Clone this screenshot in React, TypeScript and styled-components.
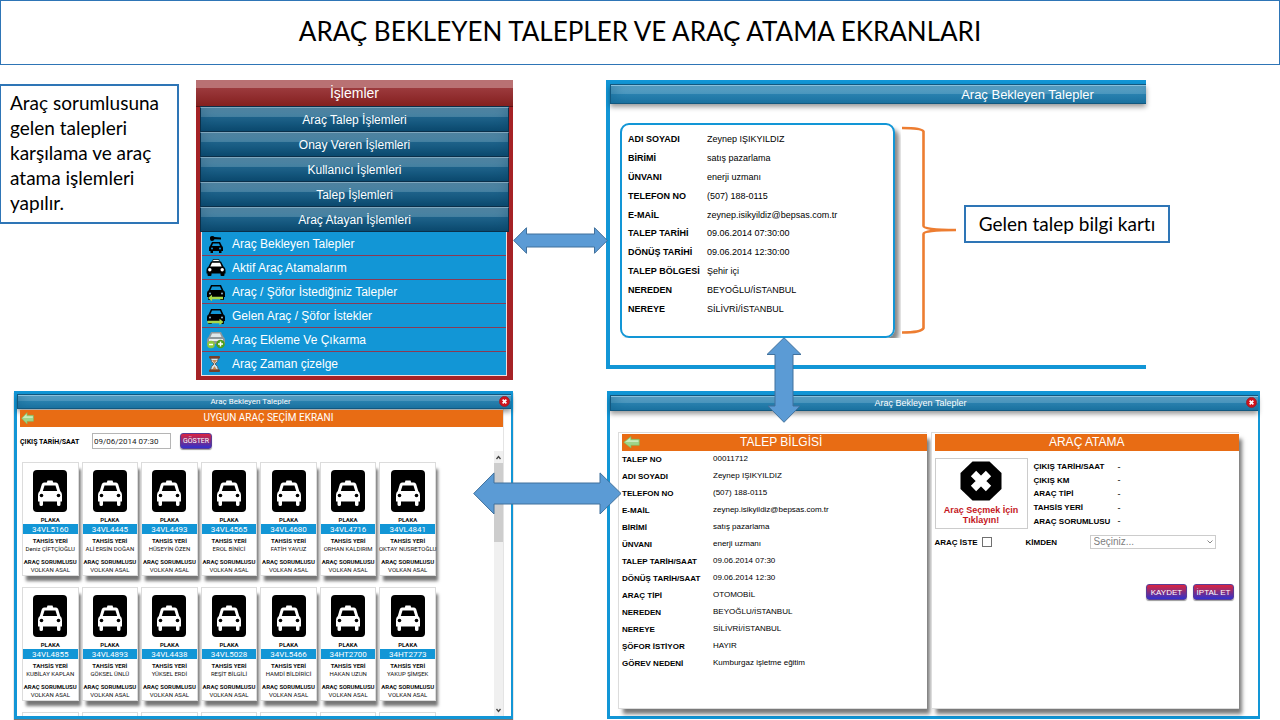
import React from "react";
import styled, { createGlobalStyle } from "styled-components";

const SANS = `"Liberation Sans", Arial, sans-serif`;
const NARROW = `Roboto, "Liberation Sans", sans-serif`;
const SLIDE = `Lato, "Open Sans", sans-serif`;
const BLUE = "#1296d6";
const ORANGE = "#e86c14";

const GlobalStyle = createGlobalStyle`
  * { box-sizing: border-box; }
  body { margin: 0; background: #fff; color: #000; font-family: ${SANS}; font-variant-ligatures: none; }
  button, input, select { font-family: inherit; margin: 0; }
  table { border-collapse: collapse; }
  th, td { padding: 0; text-align: left; }
  svg { display: block; }
`;

const Page = styled.div`
  overflow: hidden;
`;

const SlideTitle = styled.h1`
  margin: 0;
  height: 65px;
  display: flex;
  align-items: center;
  justify-content: center;
  padding-bottom: 4px;
  border: 1px solid #2e75b6;
  font-family: ${SLIDE};
  font-size: 26px;
  font-weight: 400;
`;

const Board = styled.main`
  display: grid;
  grid-template-columns: minmax(0, 513fr) minmax(0, 654fr);
  gap: 11px 93px;
  padding: 15px 20px 1px 0;
  align-items: start;
`;

const MenuCell = styled.div`
  display: flex;
  align-items: flex-start;
  gap: 17px;
`;

const Note = styled.p`
  margin: 4px 0 0;
  width: 179px;
  height: 140px;
  padding: 4px 9px;
  border: 2px solid #2e75b6;
  border-left-width: 1px;
  font-family: ${SLIDE};
  font-size: 19px;
  line-height: 25px;
`;

const Menu = styled.nav`
  position: relative;
  flex: 1;
  padding: 0 4px 4px;
  background: #a52226;
`;

const MenuTitle = styled.h2`
  margin: 0 -4px;
  height: 27px;
  line-height: 26px;
  text-align: center;
  color: #fff;
  font-size: 14px;
  font-weight: 400;
  background: linear-gradient(#b97173 0 8px, #9c3a3d 8px, #84201f 100%);
  border-bottom: 1px solid #5c1214;
`;

const MenuButton = styled.button`
  display: block;
  width: 100%;
  height: 25px;
  padding: 1px 0 0;
  border: 1px solid #0a2f49;
  border-top-color: #7fa6bd;
  outline: 0;
  box-shadow: inset 0 0 14px #0a3f6066, 0 -1px #0a2f49;
  background: linear-gradient(#5f93b0, #4682a3 9px, #1f648c 9px, #0c4c72);
  color: #fff;
  font-size: 12px;
  line-height: 20px;
`;

const MenuList = styled.ul`
  list-style: none;
  margin: 0 2px 0 1px;
  padding: 0;
  border: 1px solid #f3dede;
  border-top: 0;
  background: ${BLUE};
`;

const MenuItem = styled.li`
  border-bottom: 1px solid #8a3a55;
  &:last-child { border-bottom: 0; }
`;

const MenuLink = styled.a`
  display: flex;
  align-items: center;
  gap: 6px;
  height: 23px;
  padding-left: 4px;
  color: #fff;
  font-size: 12px;
  text-decoration: none;
`;

const HArrow = styled.svg`
  position: absolute;
  z-index: 3;
  left: 100%;
  top: 147px;
`;

const WideArrow = styled.svg`
  position: absolute;
  z-index: 3;
  left: calc(100% - 38px);
  top: 78px;
`;

const DownArrow = styled.svg`
  position: absolute;
  z-index: 3;
  left: 156px;
  bottom: -58px;
`;

const Bar = styled.header<{ $h: number; $narrow?: boolean }>`
  position: relative;
  height: ${(p) => p.$h}px;
  display: flex;
  align-items: center;
  justify-content: center;
  border: 1px solid #12587f;
  border-right-width: 0;
  box-shadow: inset 0 1px #8ac0dc, inset 4px 0 12px #0d5f8a66, 0 3px 5px #0006;
  background: linear-gradient(#68a9cb, #4e9ac1 48%, #2c84b2 48%, #1e76a5);
  color: #fff;
  font-family: ${(p) => (p.$narrow ? NARROW : SANS)};
`;

const BarTitle = styled.h2<{ $size: number }>`
  margin: 0 28px 0 0;
  font-size: ${(p) => p.$size}px;
  font-weight: 400;
`;

const RequestWindow = styled.section`
  position: relative;
  margin-right: 114px;
  border: solid ${BLUE};
  border-width: 4px 0 4px 4px;
  ${BarTitle} { margin: 0 0 0 298px; }
`;

const RequestRow = styled.div`
  display: flex;
  align-items: flex-start;
  padding: 19px 0 27px 10px;
`;

const RequestCard = styled.div`
  width: 275px;
  height: 215px;
  padding: 5px 0 0 6px;
  border: 2px solid ${BLUE};
  border-radius: 9px;
  box-shadow: 5px 5px 4px -1px #0007;
  clip-path: inset(-2px -6px 0 0);
`;

const Brace = styled.svg`
  margin: 2px 0 0 7px;
`;

const Caption = styled.p`
  position: absolute;
  z-index: 2;
  left: 354px;
  top: 121px;
  width: 206px;
  height: 38px;
  margin: 0;
  border: 2px solid #2e75b6;
  background: #fff;
  text-align: center;
  font-family: ${SLIDE};
  font-size: 19px;
  line-height: 34px;
  white-space: nowrap;
`;

const RequestTable = styled.table`
  height: 188px;
  th { width: 79px; font-size: 9px; white-space: nowrap; }
  td { font-size: 9px; }
`;

const PickWindow = styled.section`
  position: relative;
  margin-left: 14px;
  border: 3px solid ${BLUE};
  border-right-width: 2px;
  box-shadow: 0 2px 1px #0008;
`;

const CloseButton = styled.button`
  position: absolute;
  right: 1px;
  top: 1px;
  width: 11px;
  height: 11px;
  padding: 0;
  border: 0;
  background: none;
`;

const PickBody = styled.div`
  margin-right: 7px;
  padding: 1px 0 0 3px;
  border-right: 1px solid #e4e4e4;
`;

const Banner = styled.div<{ $narrow?: boolean }>`
  position: relative;
  display: flex;
  align-items: center;
  justify-content: center;
  height: 17px;
  padding-bottom: 2px;
  background: ${ORANGE};
  color: #fff;
  font-family: ${(p) => (p.$narrow ? NARROW : SANS)};
  font-size: ${(p) => (p.$narrow ? 10 : 12)}px;
`;

const BannerTitle = styled.h3<{ $shift?: boolean }>`
  margin: 0 0 0 ${(p) => (p.$shift ? 14 : 0)}px;
  font-size: inherit;
  line-height: 14px;
  font-weight: 400;
`;

const BackButton = styled.button`
  position: absolute;
  left: 1px;
  top: 2px;
  padding: 0;
  border: 0;
  background: none;
`;

const FilterRow = styled.div`
  display: flex;
  align-items: flex-start;
  height: 24px;
  padding-top: 6px;
  font-family: ${NARROW};
  label { width: 72px; font-size: 7px; line-height: 18px; font-weight: 700; white-space: nowrap; }
`;

const DateInput = styled.input`
  width: 79px;
  height: 16px;
  margin-right: 9px;
  padding: 0 1px;
  border: 1px solid #b5b5b5;
  color: #222;
  font-size: 8px;
`;

const ActionButton = styled.button<{ $w: number; $size: number }>`
  width: ${(p) => p.$w}px;
  height: 16px;
  padding: 0;
  border: 1px solid #5a3d96;
  border-radius: 3px;
  background: linear-gradient(#dc2340, #7a2d86 55%, #3131d0);
  color: #fff;
  font-size: ${(p) => p.$size}px;
  box-shadow: 0 1px 1px #0006;
`;

const Scroller = styled.div`
  display: flex;
  height: 265px;
  overflow: hidden;
`;

const CarGrid = styled.div`
  flex: 1;
  display: grid;
  grid-template-columns: repeat(7, minmax(0, 1fr));
  grid-auto-rows: 114px;
  gap: 11px 3px;
  padding: 11px 58px 0 2px;
`;

const CarCard = styled.article`
  display: flex;
  flex-direction: column;
  align-items: stretch;
  border: 1px solid #dcdcdc;
  background: #fff;
  box-shadow: 3px 6px 3px -1px #0008;
  padding-top: 7px;
  text-align: center;
  font-family: ${NARROW};
  white-space: nowrap;
  svg { align-self: center; margin-bottom: 4px; flex: none; }
`;

const CardLabel = styled.strong<{ $gap?: number }>`
  display: flex;
  justify-content: center;
  margin-top: ${(p) => p.$gap || 0}px;
  font-size: 6px;
  line-height: 8px;
  color: #111;
`;

const CardText = styled.span`
  display: flex;
  justify-content: center;
  font-size: 6px;
  line-height: 8px;
  color: #111;
`;

const Plate = styled.span`
  height: 10px;
  background: ${BLUE};
  color: #fff;
  font-size: 8px;
  line-height: 12px;
  overflow: hidden;
`;

const ScrollTrack = styled.div`
  width: 9px;
  display: flex;
  flex-direction: column;
  align-items: center;
  background: #f0f0f0;
`;

const ScrollThumb = styled.div`
  width: 9px;
  height: 79px;
  margin-bottom: auto;
  background: #cdcdcd;
`;

const DetailWindow = styled.section`
  position: relative;
  margin-left: 1px;
  height: 328px;
  border: 3px solid ${BLUE};
  border-top-width: 4px;
  border-right-width: 2px;
`;

const DetailBody = styled.div`
  display: grid;
  grid-template-columns: minmax(0, 1fr) minmax(0, 1fr);
  gap: 4px;
  padding: 21px 19px 0 8px;
`;

const DetailCard = styled.div`
  height: 277px;
  padding: 1px 0 0 3px;
  border: 1px solid #dcdcdc;
  border-right: 0;
  background: #fff;
  box-shadow: 4px 6px 4px -1px #0008;
`;

const DetailTable = styled.table`
  th { width: 91px; height: 17px; font-size: 8px; line-height: 17px; vertical-align: bottom; }
  td { font-size: 8px; line-height: 15px; vertical-align: top; }
`;

const AssignRow = styled.div`
  display: flex;
  gap: 6px;
  margin-top: 7px;
`;

const ChooseCar = styled.button`
  width: 93px;
  height: 71px;
  padding: 2px 0 0;
  display: flex;
  flex-direction: column;
  align-items: center;
  gap: 4px;
  border: 1px solid #ccc;
  background: #fff;
  color: #c4161c;
  font-size: 9px;
  line-height: 10px;
  font-weight: 700;
`;

const SpecTable = styled.table`
  height: 68px;
  margin-top: 2px;
  th { width: 84px; font-size: 8px; }
  td { font-size: 9px; }
`;

const AskRow = styled.div`
  display: flex;
  align-items: center;
  height: 14px;
  margin: 6px 0 0;
  font-size: 8px;
  font-weight: 700;
  label { white-space: nowrap; }
`;

const Tick = styled.input`
  appearance: none;
  width: 10px;
  height: 10px;
  border: 1px solid #707070;
  background: #fff;
`;

const AskLabel = styled.label`
  width: 47px;
`;

const WhoLabel = styled.label`
  width: 64px;
  margin-left: 34px;
`;

const SelectWrap = styled.span`
  position: relative;
  svg { position: absolute; right: 3px; top: 5px; }
`;

const WhoSelect = styled.select`
  appearance: none;
  display: block;
  width: 126px;
  height: 14px;
  padding: 0 3px;
  border: 1px solid #ccc;
  border-radius: 0;
  background: #fff;
  color: #808080;
  font-size: 10px;
  line-height: 12px;
`;

const Actions = styled.div`
  display: flex;
  justify-content: flex-end;
  gap: 6px;
  margin: 35px 5px 0 0;
`;

const CarShape = () => (
  <>
    <path d="M5 3 H15 L17.500 8.500 Q19 9 19 11 V15 H1 V11 Q1 9 2.500 8.500 Z" />
    <rect x="2" y="14" width="4" height="4" rx="1" />
    <rect x="14" y="14" width="4" height="4" rx="1" />
    <path d="M6 4.500 H14 L15.500 8 H4.500 Z" fill={BLUE} />
    <circle cx="4" cy="11.500" r="1" fill="#8fb8cc" />
    <circle cx="16" cy="11.500" r="1" fill="#8fb8cc" />
  </>
);

const MenuIcon = ({ kind }: { kind: string }) => (
  <svg width="20" height="20" viewBox="0 0 20 20" aria-hidden="true">
    {kind === "key" && (
      <>
        <path d="M6 8 H14 L16 12 Q17 12.500 17 14 V17 H15.500 V19 H13 V17 H7 V19 H4.500 V17 H3 V14 Q3 12.500 4 12 Z" />
        <path d="M7 9.500 H13 L14 12 H6 Z" fill={BLUE} />
        <circle cx="6" cy="14.500" r="1" fill={BLUE} />
        <circle cx="14" cy="14.500" r="1" fill={BLUE} />
        <path d="M4 3.500 Q4 2 6 2 Q8 2 8.500 3 L15 3.500 V5.500 L8.500 5.200 Q8 7 6 7 Q4 7 4 5 Z" />
      </>
    )}
    {kind === "taxi" && (
      <>
        <path d="M7 1.500 H13 L13.500 3.500 H6.500 Z" fill="#fff" stroke="#000" strokeWidth=".7" />
        <path d="M5 3.500 H15 L17.500 8.500 Q19.500 9.500 19.500 12 V15.500 H.5 V12 Q.5 9.500 2.500 8.500 Z" />
        <path d="M6 4.800 H14 L15.700 8.500 H4.300 Z" fill="#fff" />
        <circle cx="3.800" cy="11.800" r="1.700" fill="#fff" />
        <circle cx="16.200" cy="11.800" r="1.700" fill="#fff" />
        <rect x="1.500" y="14" width="4" height="4" rx="1" />
        <rect x="14.500" y="14" width="4" height="4" rx="1" />
      </>
    )}
    {kind === "out" && (
      <>
        <CarShape />
        <path d="M2 16 L6 12.800 V14.800 H17 V17.200 H6 V19.200 Z" fill="#a8d84a" />
      </>
    )}
    {kind === "in" && (
      <>
        <CarShape />
        <path d="M17.500 16 L13.500 12.800 V14.800 H1.500 V17.200 H13.500 V19.200 Z" fill="#a8d84a" />
      </>
    )}
    {kind === "edit" && (
      <>
        <path d="M5 2 H15 L17.500 7 Q19 8 19 10 V14 H1 V10 Q1 8 2.500 7 Z" fill="#8d979c" />
        <path d="M6 3.500 H14 L15.500 7 H4.500 Z" fill="#dfe7ea" />
        <rect x="3" y="9" width="14" height="2" fill="#e9eef0" />
        <circle cx="5" cy="14.500" r="3.800" fill="#8fc83c" />
        <path d="M3 14.500 H7" stroke="#fff" strokeWidth="1.500" />
        <circle cx="14.500" cy="14" r="4.300" fill="#4f9e1b" />
        <path d="M12 14 H17 M14.500 11.500 V16.500" stroke="#fff" strokeWidth="1.500" />
      </>
    )}
    {kind === "time" && (
      <>
        <path d="M4.500 4 Q5 8 8 10 Q5 12 4.500 16 H12.500 Q12 12 9 10 Q12 8 12.500 4 Z" fill="#d5e6ef" stroke="#5d4a40" strokeWidth=".8" />
        <path d="M6 6 H11 L8.500 9.500 Z M6 16 L8.500 12 L11 16 Z" fill="#c98a50" />
        <rect x="3" y="2" width="11" height="2.500" rx="1" fill="#75402a" />
        <rect x="3" y="15.500" width="11" height="2.500" rx="1" fill="#75402a" />
      </>
    )}
  </svg>
);

const TaxiSign = () => (
  <svg width="34" height="42" viewBox="0 0 34 42" aria-hidden="true">
    <rect width="34" height="42" rx="4" />
    <path
      d="M14.500 10.500 H19.500 L20.200 12.500 H23 Q24.500 12.500 25.200 14.300 L27.200 21 Q29 22.500 29 25 V31.500 H27.500 V34.500 Q27.500 36 25.800 36 Q24 36 24 34.500 V31.500 H10 V34.500 Q10 36 8.200 36 Q6.500 36 6.500 34.500 V31.500 H5 V25 Q5 22.500 6.800 21 L8.800 14.300 Q9.500 12.500 11 12.500 H13.800 Z"
      fill="#fff"
    />
    <path d="M11.500 15.500 H22.500 L24.200 21 H9.800 Z" />
    <circle cx="8.500" cy="25.500" r="1.800" />
    <circle cx="25.500" cy="25.500" r="1.800" />
  </svg>
);

const CloseIcon = () => (
  <svg width="11" height="11" viewBox="0 0 10 10" aria-hidden="true">
    <circle cx="5" cy="5" r="4.600" fill="#d0121b" stroke="#8c2a36" strokeWidth=".8" />
    <path d="M3.300 3.300 L6.700 6.700 M6.700 3.300 L3.300 6.700" stroke="#fff" strokeWidth="1.500" />
  </svg>
);

const BackIcon = ({ w }: { w: number }) => (
  <svg width={w} height="13" viewBox="0 0 16 13" preserveAspectRatio="none" aria-hidden="true">
    <path d="M.7 6.300 L7.500 .6 V3.300 H15.300 V9.300 H7.500 V12 Z" fill="#9fd48a" stroke="#7cc060" strokeWidth=".6" />
    <path d="M2 6 L6.800 2 V4.300 H14.500 V6 Z" fill="#c9ebbc" />
  </svg>
);

const menuGroups = [
  "Araç Talep İşlemleri",
  "Onay Veren İşlemleri",
  "Kullanıcı İşlemleri",
  "Talep İşlemleri",
  "Araç Atayan İşlemleri",
];

const menuLinks = [
  ["key", "Araç Bekleyen Talepler"],
  ["taxi", "Aktif Araç Atamalarım"],
  ["out", "Araç / Şöfor İstediğiniz Talepler"],
  ["in", "Gelen Araç / Şöfor İstekler"],
  ["edit", "Araç Ekleme Ve Çıkarma"],
  ["time", "Araç Zaman çizelge"],
];

const request = [
  ["ADI SOYADI", "Zeynep IŞIKYILDIZ"],
  ["BİRİMİ", "satış pazarlama"],
  ["ÜNVANI", "enerji uzmanı"],
  ["TELEFON NO", "(507) 188-0115"],
  ["E-MAİL", "zeynep.isikyildiz@bepsas.com.tr"],
  ["TALEP TARİHİ", "09.06.2014 07:30:00"],
  ["DÖNÜŞ TARİHİ", "09.06.2014 12:30:00"],
  ["TALEP BÖLGESİ", "Şehir içi"],
  ["NEREDEN", "BEYOĞLU/İSTANBUL"],
  ["NEREYE", "SİLİVRİ/İSTANBUL"],
];

const detail = [
  ["TALEP NO", "00011712"],
  ["ADI SOYADI", "Zeynep IŞIKYILDIZ"],
  ["TELEFON NO", "(507) 188-0115"],
  ["E-MAİL", "zeynep.isikyildiz@bepsas.com.tr"],
  ["BİRİMİ", "satış pazarlama"],
  ["ÜNVANI", "enerji uzmanı"],
  ["TALEP TARİH/SAAT", "09.06.2014 07:30"],
  ["DÖNÜŞ TARİH/SAAT", "09.06.2014 12:30"],
  ["ARAÇ TİPİ", "OTOMOBİL"],
  ["NEREDEN", "BEYOĞLU/İSTANBUL"],
  ["NEREYE", "SİLİVRİ/İSTANBUL"],
  ["ŞÖFOR İSTİYOR", "HAYIR"],
  ["GÖREV NEDENİ", "Kumburgaz işletme eğitim"],
];

const specs = ["ÇIKIŞ TARİH/SAAT", "ÇIKIŞ KM", "ARAÇ TİPİ", "TAHSİS YERİ", "ARAÇ SORUMLUSU"];

const cars = [
  ["34VL5160", "Deniz ÇİFTÇİOĞLU"],
  ["34VL4445", "ALİ ERSİN DOĞAN"],
  ["34VL4493", "HÜSEYİN ÖZEN"],
  ["34VL4565", "EROL BİNİCİ"],
  ["34VL4680", "FATİH YAVUZ"],
  ["34VL4716", "ORHAN KALDIRIM"],
  ["34VL4841", "OKTAY NUSRETOĞLU"],
  ["34VL4855", "KUBİLAY KAPLAN"],
  ["34VL4893", "GÖKSEL ÜNLÜ"],
  ["34VL4438", "YÜKSEL ERDİ"],
  ["34VL5028", "REŞİT BİLGİLİ"],
  ["34VL5466", "HAMDİ BİLDİRİCİ"],
  ["34HT2700", "HAKAN UZUN"],
  ["34HT2773", "YAKUP ŞİMŞEK"],
];

const Rows = ({ data }: { data: string[][] }) => (
  <tbody>
    {data.map(([label, value]) => (
      <tr key={label}>
        <th scope="row">{label}</th>
        <td>{value}</td>
      </tr>
    ))}
  </tbody>
);

export default function App() {
  return (
    <Page>
      <GlobalStyle />
      <SlideTitle>ARAÇ BEKLEYEN TALEPLER VE ARAÇ ATAMA EKRANLARI</SlideTitle>
      <Board>
        <MenuCell>
          <Note>Araç sorumlusuna gelen talepleri karşılama ve araç atama işlemleri yapılır.</Note>
          <Menu>
            <MenuTitle>İşlemler</MenuTitle>
            {menuGroups.map((g) => (
              <MenuButton key={g}>{g}</MenuButton>
            ))}
            <MenuList>
              {menuLinks.map(([kind, text]) => (
                <MenuItem key={text}>
                  <MenuLink href="#">
                    <MenuIcon kind={kind} />
                    {text}
                  </MenuLink>
                </MenuItem>
              ))}
            </MenuList>
            <HArrow width="95" height="27" viewBox="0 0 95 27" aria-hidden="true">
              <path d="M.7 13.500 L13.500 .7 V7 H81.500 V.7 L94.300 13.500 L81.500 26.300 V20 H13.500 V26.300 Z" fill="#5b9bd5" stroke="#41719c" />
            </HArrow>
          </Menu>
        </MenuCell>

        <RequestWindow>
          <Bar $h={20}>
            <BarTitle $size={13}>Araç Bekleyen Talepler</BarTitle>
          </Bar>
          <RequestRow>
            <RequestCard>
              <RequestTable>
                <Rows data={request} />
              </RequestTable>
            </RequestCard>
            <Brace width="56" height="210" viewBox="0 0 56 210" aria-hidden="true">
              <path
                d="M0 3 Q20 3 21.500 6.500 V101 Q21.500 105 54 105 Q21.500 105 21.500 109 V203 Q20 207.500 0 207.500"
                fill="none"
                stroke="#ed7d31"
                strokeWidth="2.600"
              />
            </Brace>
          </RequestRow>
          <Caption>Gelen talep bilgi kartı</Caption>
          <DownArrow width="36" height="86" viewBox="0 0 36 86" aria-hidden="true">
            <path d="M18 .7 L35 17.500 H27 V69 H34 L18 85.300 L2 69 H9 V17.500 H1 Z" fill="#5b9bd5" stroke="#41719c" />
          </DownArrow>
        </RequestWindow>

        <PickWindow>
          <Bar $h={15} $narrow>
            <BarTitle $size={8}>Araç Bekleyen Talepler</BarTitle>
            <CloseButton aria-label="Kapat">
              <CloseIcon />
            </CloseButton>
          </Bar>
          <PickBody>
            <Banner $narrow>
              <BackButton aria-label="Geri">
                <BackIcon w={13} />
              </BackButton>
              <BannerTitle $shift>UYGUN ARAÇ SEÇİM EKRANI</BannerTitle>
            </Banner>
            <FilterRow>
              <label htmlFor="exit-date">ÇIKIŞ TARİH/SAAT</label>
              <DateInput id="exit-date" defaultValue="09/06/2014 07:30" />
              <ActionButton $w={32} $size={7}>GÖSTER</ActionButton>
            </FilterRow>
            <Scroller>
              <CarGrid>
                {cars.map(([plate, place]) => (
                  <CarCard key={plate}>
                    <TaxiSign />
                    <CardLabel>PLAKA</CardLabel>
                    <Plate>{plate}</Plate>
                    <CardLabel $gap={3}>TAHSİS YERİ</CardLabel>
                    <CardText>{place}</CardText>
                    <CardLabel $gap={5}>ARAÇ SORUMLUSU</CardLabel>
                    <CardText>VOLKAN ASAL</CardText>
                  </CarCard>
                ))}
                {[0, 1, 2, 3, 4, 5, 6].map((n) => (
                  <CarCard key={n} />
                ))}
              </CarGrid>
              <ScrollTrack>
                <svg width="9" height="12" viewBox="0 0 9 12" aria-hidden="true">
                  <path d="M2.500 8 L4.500 5.500 L6.500 8" fill="none" stroke="#444" strokeWidth="1.300" />
                </svg>
                <ScrollThumb />
                <svg width="9" height="12" viewBox="0 0 9 12" aria-hidden="true">
                  <path d="M2.500 5 L4.500 7.500 L6.500 5" fill="none" stroke="#444" strokeWidth="1.300" />
                </svg>
              </ScrollTrack>
            </Scroller>
          </PickBody>
          <WideArrow width="149" height="43" viewBox="0 0 149 43" aria-hidden="true">
            <path d="M.7 21.500 L21 .9 V11 H127 V.9 L148 21.500 L127 42 V32 H21 V42 Z" fill="#5b9bd5" stroke="#41719c" />
          </WideArrow>
        </PickWindow>

        <DetailWindow>
          <Bar $h={16}>
            <BarTitle $size={9}>Araç Bekleyen Talepler</BarTitle>
            <CloseButton aria-label="Kapat">
              <CloseIcon />
            </CloseButton>
          </Bar>
          <DetailBody>
            <DetailCard>
              <Banner>
                <BackButton aria-label="Geri">
                  <BackIcon w={17} />
                </BackButton>
                <BannerTitle $shift>TALEP BİLGİSİ</BannerTitle>
              </Banner>
              <DetailTable>
                <Rows data={detail} />
              </DetailTable>
            </DetailCard>
            <DetailCard>
              <Banner>
                <BannerTitle>ARAÇ ATAMA</BannerTitle>
              </Banner>
              <AssignRow>
                <ChooseCar>
                  <svg width="42" height="40" viewBox="0 0 42 40" aria-hidden="true">
                    <path d="M12.500 .5 H29.500 L41.500 12 V28 L29.500 39.500 H12.500 L.5 28 V12 Z" />
                    <path d="M13.500 12.500 L28.500 27.500 M28.500 12.500 L13.500 27.500" stroke="#fff" strokeWidth="7.500" />
                  </svg>
                  <span>
                    Araç Seçmek İçin
                    <br />
                    Tıklayın!
                  </span>
                </ChooseCar>
                <SpecTable>
                  <Rows data={specs.map((s) => [s, "-"])} />
                </SpecTable>
              </AssignRow>
              <AskRow>
                <AskLabel htmlFor="ask-car">ARAÇ İSTE</AskLabel>
                <Tick id="ask-car" type="checkbox" />
                <WhoLabel htmlFor="ask-who">KİMDEN</WhoLabel>
                <SelectWrap>
                  <WhoSelect id="ask-who">
                    <option>Seçiniz...</option>
                  </WhoSelect>
                  <svg width="6" height="4" viewBox="0 0 6 4" aria-hidden="true">
                    <path d="M.5 .5 L3 3 L5.500 .5" fill="none" stroke="#888" />
                  </svg>
                </SelectWrap>
              </AskRow>
              <Actions>
                <ActionButton $w={41} $size={8}>KAYDET</ActionButton>
                <ActionButton $w={41} $size={8}>İPTAL ET</ActionButton>
              </Actions>
            </DetailCard>
          </DetailBody>
        </DetailWindow>
      </Board>
    </Page>
  );
}
